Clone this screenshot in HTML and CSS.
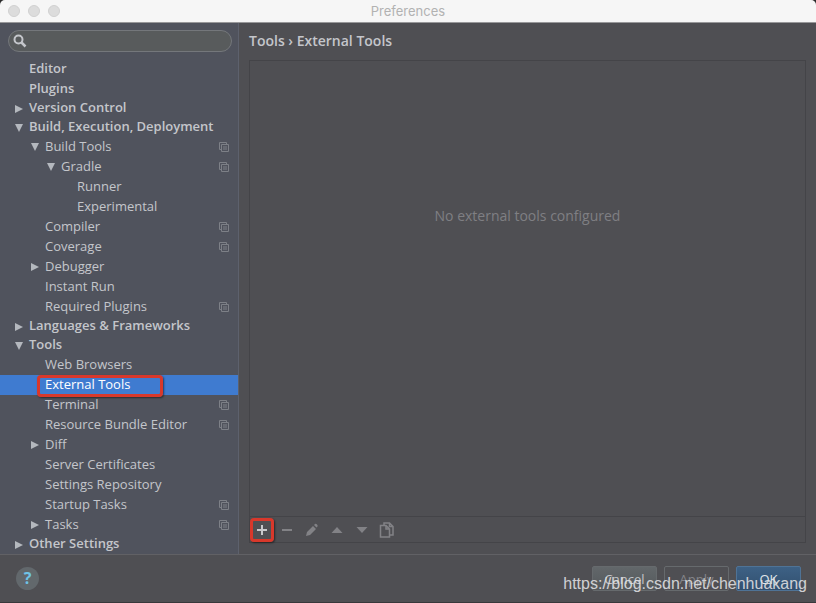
FILE: index.html
```html
<!DOCTYPE html>
<html lang="en">
<head>
    <meta charset="UTF-8">
    <meta name="viewport" content="width=device-width, initial-scale=1">
    <title>Preferences</title>
    <link rel="stylesheet" href="styles.css">
</head>
<body>

<!-- Shared icons -->
<svg class="sprite" aria-hidden="true">
    <symbol id="right" viewBox="0 0 10 10"><path d="M1 1v8l8-4z" fill="currentColor"/></symbol>
    <symbol id="down" viewBox="0 0 10 10"><path d="M1 1h8L5 9z" fill="currentColor"/></symbol>
    <symbol id="project" viewBox="0 0 10 10">
        <path d="M2.500 7.500H.5v-7h7v2M2.500 2.500h7v7h-7zM4 5h4M4 7h4" fill="none" stroke="currentColor"/>
    </symbol>
</svg>

<div class="window">
    <header class="titlebar">
        <div class="lights"><span></span><span></span><span></span></div>
        <h1>Preferences</h1>
    </header>

    <div class="content">
        <!-- Settings tree -->
        <aside class="sidebar">
            <div class="search">
                <svg viewBox="0 0 14 14" aria-hidden="true">
                    <circle cx="5.500" cy="5.500" r="4" fill="none" stroke="currentColor" stroke-width="2"/>
                    <path d="M8.500 8.500l4 4" stroke="currentColor" stroke-width="2.500"/>
                </svg>
                <input type="text" aria-label="Search settings">
            </div>
            <ul class="tree">
                <li class="group first"><a href="#">Editor</a></li>
                <li class="group"><a href="#">Plugins</a></li>
                <li class="group"><svg class="arrow"><use href="#right"/></svg><a href="#">Version Control</a></li>
                <li class="group"><svg class="arrow"><use href="#down"/></svg><a href="#">Build, Execution, Deployment</a></li>
                <li class="level2"><svg class="arrow"><use href="#down"/></svg><a href="#">Build Tools</a><svg class="scope"><use href="#project"/></svg></li>
                <li class="level3"><svg class="arrow"><use href="#down"/></svg><a href="#">Gradle</a><svg class="scope"><use href="#project"/></svg></li>
                <li class="level4"><a href="#">Runner</a></li>
                <li class="level4"><a href="#">Experimental</a></li>
                <li class="level2"><a href="#">Compiler</a><svg class="scope"><use href="#project"/></svg></li>
                <li class="level2"><a href="#">Coverage</a><svg class="scope"><use href="#project"/></svg></li>
                <li class="level2"><svg class="arrow"><use href="#right"/></svg><a href="#">Debugger</a></li>
                <li class="level2"><a href="#">Instant Run</a></li>
                <li class="level2"><a href="#">Required Plugins</a><svg class="scope"><use href="#project"/></svg></li>
                <li class="group"><svg class="arrow"><use href="#right"/></svg><a href="#">Languages &amp; Frameworks</a></li>
                <li class="group"><svg class="arrow"><use href="#down"/></svg><a href="#">Tools</a></li>
                <li class="level2"><a href="#">Web Browsers</a></li>
                <li class="level2 selected"><a href="#">External Tools</a><span class="mark"></span></li>
                <li class="level2"><a href="#">Terminal</a><svg class="scope"><use href="#project"/></svg></li>
                <li class="level2"><a href="#">Resource Bundle Editor</a><svg class="scope"><use href="#project"/></svg></li>
                <li class="level2"><svg class="arrow"><use href="#right"/></svg><a href="#">Diff</a></li>
                <li class="level2"><a href="#">Server Certificates</a></li>
                <li class="level2"><a href="#">Settings Repository</a></li>
                <li class="level2"><a href="#">Startup Tasks</a><svg class="scope"><use href="#project"/></svg></li>
                <li class="level2"><svg class="arrow"><use href="#right"/></svg><a href="#">Tasks</a><svg class="scope"><use href="#project"/></svg></li>
                <li class="group"><svg class="arrow"><use href="#right"/></svg><a href="#">Other Settings</a></li>
            </ul>
        </aside>

        <!-- External tools page -->
        <main class="page">
            <h2>Tools › External Tools</h2>
            <div class="panel">
                <div class="list">
                    <p>No external tools configured</p>
                </div>
                <div class="toolbar">
                    <button type="button" class="add" aria-label="Add">
                        <svg viewBox="0 0 16 16"><path d="M8 3v10M3 8h10" stroke="currentColor" stroke-width="2"/></svg>
                        <span class="mark"></span>
                    </button>
                    <button type="button" aria-label="Remove">
                        <svg viewBox="0 0 16 16"><path d="M3 8h10" stroke="currentColor" stroke-width="2"/></svg>
                    </button>
                    <button type="button" aria-label="Edit">
                        <svg viewBox="0 0 16 16"><path d="M2 14l1-4 6-6 3 3-6 6zM10 3l1-1q1-.5 2 .500t.5 2l-1 1z" fill="currentColor"/></svg>
                    </button>
                    <button type="button" aria-label="Move up">
                        <svg viewBox="0 0 16 16"><path d="M2.500 11h11L8 5z" fill="currentColor"/></svg>
                    </button>
                    <button type="button" aria-label="Move down">
                        <svg viewBox="0 0 16 16"><path d="M2.500 5h11L8 11z" fill="currentColor"/></svg>
                    </button>
                    <button type="button" aria-label="Copy">
                        <svg viewBox="0 0 16 16"><path d="M5 3V1h5.500L14 4.500V13h-3M1.500 3.500H7L10.500 7v8h-9zM7 3.500V7h3.500M10.500 1v3.500H14" fill="none" stroke="currentColor" stroke-width="1.500"/></svg>
                    </button>
                </div>
            </div>
        </main>
    </div>

    <footer class="footer">
        <button type="button" class="help" aria-label="Help">?</button>
        <div class="actions">
            <button type="button" class="cancel">Cancel</button>
            <button type="button" class="apply" disabled>Apply</button>
            <button type="button" class="ok">OK</button>
        </div>
        <span class="watermark">https://blog.csdn.net/chenhuakang</span>
    </footer>
</div>

</body>
</html>
```
FILE: styles.css
```css
* {
    box-sizing: border-box;
}
body {
    margin: 0;
    background: #2b2b2b;
    color: #c4c6cb;
    font-family: "Open Sans", "Noto Sans", sans-serif;
    font-size: 13px;
    font-weight: 500;
}
button {
    padding: 0;
    border: none;
    background: none;
    color: inherit;
    font: inherit;
}
.sprite {
    display: none;
}
.window {
    display: flex;
    flex-direction: column;
    min-height: 100vh;
    background: #4f4f53;
    border-bottom: 1px solid #38383b;
    border-radius: 5px 5px 0 0;
    overflow: hidden;
}

/* Title bar */
.titlebar {
    display: grid;
    grid-template-columns: 1fr auto 1fr;
    align-items: center;
    height: 23px;
    padding: 0 8px;
    background: #f6f6f6;
    border-bottom: 1px solid #98989a;
}
.lights {
    display: flex;
    gap: 8px;
}
.lights span {
    width: 12px;
    height: 12px;
    background: #dcdcdc;
    border: 1px solid #d0d0d0;
    border-radius: 50%;
}
.titlebar h1 {
    margin: 0;
    color: #b2b2b2;
    font-family: Inter, sans-serif;
    font-size: 13px;
    font-weight: 400;
}

/* Sidebar */
.content {
    display: flex;
    flex: 1;
}
.sidebar {
    flex: none;
    width: 239px;
    padding-top: 7px;
    background: #50535d;
    border-right: 1px solid #5d616d;
}
.search {
    display: flex;
    align-items: center;
    gap: 4px;
    height: 22px;
    margin: 0 6px 8px 8px;
    padding: 0 4px;
    background: #585b5c;
    border: 1px solid #74777b;
    border-radius: 11px;
}
.search svg {
    width: 14px;
    height: 14px;
}
.search input {
    flex: 1;
    min-width: 0;
    padding: 0;
    background: none;
    border: none;
    outline: none;
    color: inherit;
    font: inherit;
}
.tree {
    margin: 0;
    padding: 0;
    list-style: none;
}
.tree li {
    position: relative;
    display: flex;
    align-items: center;
    height: 20px;
    padding-right: 9px;
}
.tree a {
    flex: 1;
    align-self: flex-start;
    color: inherit;
    line-height: 18px;
    text-decoration: none;
    white-space: nowrap;
}
.tree .group {
    height: 19px;
    padding-left: 29px;
    font-weight: 600;
}
.tree .group a {
    line-height: 16px;
}
.tree .first {
    height: 20px;
}
.tree .level2 {
    padding-left: 45px;
}
.tree .level3 {
    padding-left: 61px;
}
.tree .level4 {
    padding-left: 77px;
}
.tree .selected {
    background: #3f7bd0;
    color: #fff;
}
.arrow {
    width: 10px;
    height: 10px;
    margin-left: -15px;
    margin-right: 5px;
    color: #b4b8be;
}
.scope {
    width: 10px;
    height: 10px;
    color: #7d8087;
}

/* Red highlight frames */
.mark {
    position: absolute;
    border: 3px solid #d8382b;
    border-radius: 4px;
    box-shadow: 1px 1px 2px rgba(0, 0, 0, 0.5);
}
.selected .mark {
    top: 0;
    left: 37px;
    width: 126px;
    height: 22px;
    z-index: 1;
}
.add .mark {
    inset: -4px;
}

/* Page */
.page {
    display: flex;
    flex: 1;
    flex-direction: column;
    min-width: 0;
    padding: 8px 10px 11px;
}
.page h2 {
    margin: 0 0 9px;
    font-size: 14px;
    font-weight: 600;
    line-height: 20px;
}
.panel {
    display: flex;
    flex: 1;
    flex-direction: column;
    border: 1px solid #444448;
}
.list {
    flex: 1;
    padding-top: 146px;
    color: #7f7f83;
    font-size: 14px;
    font-weight: 400;
    text-align: center;
}
.list p {
    margin: 0;
    line-height: 18px;
}
.toolbar {
    display: flex;
    align-items: center;
    gap: 9px;
    height: 26px;
    padding: 0 4px;
    border-top: 1px solid #444448;
    color: #828286;
}
.toolbar button {
    position: relative;
    width: 16px;
    height: 16px;
}
.toolbar svg {
    display: block;
}
.toolbar .add {
    color: #c9c9cc;
}

/* Footer */
.footer {
    position: relative;
    display: flex;
    align-items: center;
    justify-content: space-between;
    height: 48px;
    padding: 0 15px 0 16px;
    border-top: 1px solid #616165;
}
.help {
    width: 23px;
    height: 23px;
    background: #62686c;
    border-radius: 50%;
    color: #6fc3e6;
    font-size: 16px;
    font-weight: 700;
    line-height: 23px;
}
.actions {
    display: flex;
    gap: 7px;
}
.actions button {
    width: 65px;
    height: 25px;
    border: 1px solid #666a6d;
    border-radius: 2px;
}
.actions .cancel {
    background: linear-gradient(#62676a, #55595c);
}
.actions .apply {
    color: #85858a;
}
.actions .ok {
    background: linear-gradient(#3d6185, #32506f);
    border-color: #4f7396;
    color: #dfe3e8;
}
.watermark {
    position: absolute;
    right: 9px;
    bottom: 8px;
    color: rgba(225, 225, 227, 0.9);
    font-family: "Liberation Sans", Arial, sans-serif;
    font-size: 16px;
    font-weight: 400;
    line-height: 20px;
}
```
